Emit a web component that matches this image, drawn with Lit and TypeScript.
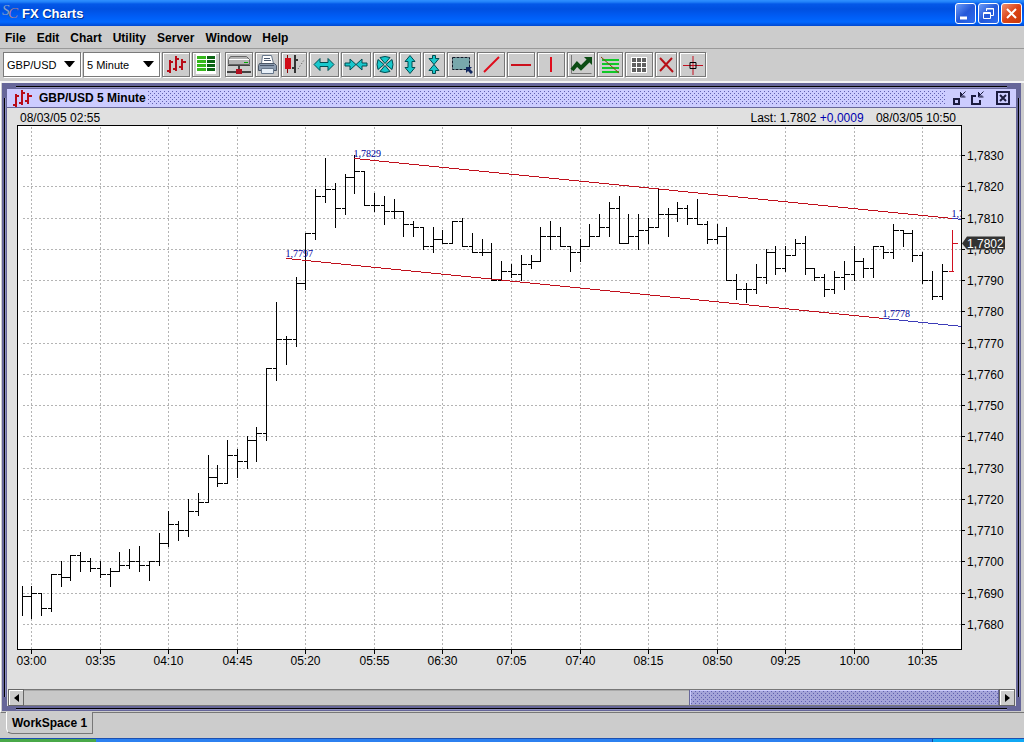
import { LitElement, html, svg, css } from "lit";
import { customElement, property, state } from "lit/decorators.js";
import { classMap } from "lit/directives/class-map.js";

/** One five-minute bar: high, low and close in pips above 1.0000. */
type Bar = [number, number, number];

const BARS: Bar[] = [
  [7692, 7683, 7689], [7692, 7682, 7690], [7690, 7683, 7685], [7696, 7684, 7696],
  [7700, 7692, 7695], [7702, 7694, 7702], [7703, 7697, 7700], [7701, 7697, 7698],
  [7700, 7695, 7696], [7698, 7692, 7697], [7703, 7697, 7699], [7704, 7698, 7700],
  [7705, 7697, 7699], [7700, 7694, 7700], [7709, 7699, 7706], [7716, 7705, 7712],
  [7713, 7707, 7710], [7720, 7708, 7716], [7722, 7715, 7719], [7734, 7719, 7727],
  [7731, 7724, 7725], [7739, 7725, 7734], [7736, 7727, 7732], [7740, 7730, 7739],
  [7743, 7732, 7741], [7762, 7739, 7762], [7783, 7758, 7771], [7772, 7763, 7771],
  [7791, 7769, 7789], [7805, 7787, 7805], [7819, 7803, 7817], [7829, 7815, 7819],
  [7821, 7807, 7813], [7824, 7811, 7823], [7830, 7818, 7825], [7825, 7814, 7814],
  [7818, 7812, 7814], [7817, 7808, 7812], [7816, 7810, 7812], [7812, 7804, 7808],
  [7809, 7804, 7807], [7807, 7800, 7801], [7807, 7799, 7803], [7806, 7802, 7802],
  [7809, 7802, 7809], [7810, 7801, 7801], [7805, 7799, 7799], [7803, 7798, 7799],
  [7802, 7790, 7790], [7796, 7790, 7793], [7795, 7791, 7792], [7798, 7790, 7795],
  [7798, 7794, 7796], [7807, 7796, 7804], [7809, 7800, 7804], [7807, 7801, 7801],
  [7801, 7793, 7799], [7803, 7796, 7801], [7808, 7801, 7804], [7811, 7804, 7807],
  [7815, 7804, 7813], [7817, 7802, 7802], [7811, 7802, 7804], [7811, 7800, 7806],
  [7810, 7802, 7807], [7819, 7807, 7811], [7813, 7804, 7811], [7815, 7809, 7813],
  [7814, 7808, 7810], [7816, 7808, 7808], [7809, 7802, 7803], [7808, 7802, 7804],
  [7807, 7790, 7790], [7792, 7784, 7787], [7789, 7783, 7787], [7795, 7786, 7791],
  [7800, 7789, 7799], [7801, 7792, 7794], [7801, 7793, 7798], [7803, 7798, 7802],
  [7804, 7792, 7794], [7794, 7790, 7791], [7792, 7785, 7787], [7793, 7786, 7791],
  [7796, 7787, 7792], [7801, 7790, 7796], [7797, 7791, 7794], [7801, 7791, 7801],
  [7801, 7797, 7799], [7808, 7797, 7806], [7806, 7801, 7805], [7806, 7796, 7798],
  [7799, 7789, 7790], [7793, 7784, 7785], [7795, 7784, 7793], [7806, 7793, 7802],
];

const FIRST_MINUTE = 2 * 60 + 55;
const TOP_PRICE = 7839.6;
const PRICE_SPAN = 167.6;

const priceText = (p: number) => `1,${p}`;
const timeText = (i: number) => {
  const m = FIRST_MINUTE + i * 5;
  return `${String(Math.floor(m / 60)).padStart(2, "0")}:${String(m % 60).padStart(2, "0")}`;
};

@customElement("price-chart")
export class PriceChart extends LitElement {
  static styles = css`
    :host { display: block; position: relative; min-height: 300px; overflow: hidden; }
    .canvas { position: absolute; inset: 0; width: 100%; height: 100%; display: block; }
    .crisp { shape-rendering: crispEdges; }
    .plot { fill: #fff; }
    .grid { stroke: #b4b4b4; stroke-dasharray: 2 2; fill: none; }
    .axis { stroke: #000; fill: none; }
    .bar { stroke: #000; fill: none; }
    .bar-live { stroke: #d01020; fill: none; }
    .trend { stroke: #c0101c; }
    .trend-ext { stroke: #3c3cb8; }
    .label { font: 12px "Liberation Sans", Arial, sans-serif; fill: #000; }
    .mid { text-anchor: middle; }
    .note { font: 10px "Liberation Serif", "Times New Roman", serif; fill: #0000a0; }
    .tag { fill: #333; }
    .tag-text { fill: #fff; }
  `;

  @state() private w = 1009;
  @state() private h = 565;
  private observer = new ResizeObserver(() => this.measure());

  connectedCallback() {
    super.connectedCallback();
    this.observer.observe(this);
  }

  disconnectedCallback() {
    this.observer.disconnect();
    super.disconnectedCallback();
  }

  private measure() {
    this.w = this.clientWidth;
    this.h = this.clientHeight;
  }

  render() {
    const left = 10;
    const pw = this.w - left - 55;
    const ph = this.h - 40;
    const right = left + pw;
    const x = (i: number) => Math.floor(5 + (i * (pw - 14)) / 95) + 0.5;
    const y = (p: number) => Math.round(((TOP_PRICE - p) * ph) / PRICE_SPAN) + 0.5;
    const prices = Array.from({ length: 16 }, (_, i) => 7830 - i * 10);
    const times = Array.from({ length: 14 }, (_, i) => 1 + i * 7);
    const last = BARS.length - 1;
    const barPath = (b: Bar, i: number) => {
      const open = i === 0 ? null : BARS[i - 1][2];
      const tick = open === null || i === last ? "" : `M${x(i) - 4} ${y(open)}H${x(i)}`;
      return `${tick}M${x(i)} ${y(b[0]) - 0.5}V${y(b[1]) + 0.5}M${x(i)} ${y(b[2])}h5`;
    };
    const slope = (y(7810) - y(7829)) / (x(95) - x(34));
    const upEnd = y(7810) + slope * (pw - x(95));
    const lowEnd = y(7778) + slope * (pw - x(88));
    const tagY = y(BARS[last][2]);

    return html`<svg class="canvas" role="img" aria-label="GBP/USD 5 Minute">
      <svg x=${left} y="0" width=${pw} height=${ph}>
        <rect class="plot" width=${pw} height=${ph}></rect>
        <g class="grid crisp">
          ${prices.map((p) => svg`<path d="M6 ${y(p)}H${pw}"></path>`)}
          ${times.map((i) => svg`<path d="M${x(i)} 2V${ph}"></path>`)}
        </g>
        <path class="bar crisp" d=${BARS.slice(0, last).map(barPath).join("")}></path>
        <g class="crisp">
          <line class="trend" x1=${x(34)} y1=${y(7829)} x2=${x(95)} y2=${y(7810)}></line>
          <line class="trend-ext" x1=${x(95)} y1=${y(7810)} x2=${pw} y2=${upEnd}></line>
          <line class="trend" x1=${x(27)} y1=${y(7797)} x2=${x(88)} y2=${y(7778)}></line>
          <line class="trend-ext" x1=${x(88)} y1=${y(7778)} x2=${pw} y2=${lowEnd}></line>
        </g>
        <path class="bar-live crisp" d=${`${barPath(BARS[last], last)}M${x(last) - 4} ${y(7793)}h5`}></path>
        <text class="note" x=${x(34) - 1} y=${y(7829) - 2}>1,7829</text>
        <text class="note" x=${x(27) - 1} y=${y(7797) - 2}>1,7797</text>
        <text class="note" x=${x(88) - 1} y=${y(7778) - 2}>1,7778</text>
        <text class="note" x=${x(95) - 1} y=${y(7810) - 2}>1,7810</text>
      </svg>
      <g class="axis crisp">
        <rect x=${left + 0.5} y="0.5" width=${pw} height=${ph}></rect>
        ${prices.map((p) => svg`<path d="M${right} ${y(p)}h4"></path>`)}
        ${times.map((i) => svg`<path d="M${left + x(i)} ${ph}v5"></path>`)}
      </g>
      ${prices.map((p) => svg`<text class="label" x=${right + 6} y=${y(p) + 4}>${priceText(p)}</text>`)}
      ${times.map((i) => svg`<text class="label mid" x=${left + x(i)} y=${ph + 16}>${timeText(i)}</text>`)}
      <path class="tag" d="M${right + 1} ${tagY}l5 -7h38v13h-38z"></path>
      <text class="label tag-text" x=${right + 6} y=${tagY + 4}>${priceText(BARS[last][2])}</text>
    </svg>`;
  }
}

const barsIcon = svg`<path d="M4 6v13M1 17h3M4 8h3M10 2v15M7 15h3M10 5h3M16 5v11M13 13h3M16 8h4" stroke="#b80c18" stroke-width="2" fill="none"></path>`;

/** Toolbar entries: name, width, glyph (20x21 artboard), spacing flag and teal outline flag. */
const TOOLS: { name: string; w: number; gap?: boolean; teal?: boolean; icon: unknown }[] = [
  { name: "Bar chart", w: 28, icon: barsIcon },
  { name: "Quote board", w: 28, icon: svg`<rect width="20" height="20" fill="#fff"></rect>
      ${[2, 6, 10, 14].map((y) => svg`<path d="M1 ${y}h9v3h-9z" fill="#36b81c"></path><path d="M11 ${y}h8v3h-8z" fill="#0c6414"></path>`)}` },
  { name: "Connection", w: 28, gap: true, icon: svg`<path d="M1.500 2.500h16l3 3v5h-21v-5z" fill="#b4b4b4" stroke="#666"></path>
      <path d="M0 5.500h20" stroke="#fff"></path><path d="M-1 11.500h22" stroke="#444"></path><path d="M15 8.500h4" stroke="#0a0"></path>
      <path d="M10 12v6M-2 18h24" stroke="#444" stroke-width="2"></path><path d="M7 15h6v5h-6z" fill="#b01020"></path>` },
  { name: "Print", w: 24, icon: svg`<path d="M5.500 1.500h9l2 8h-12z" fill="#fff" stroke="#68788c"></path>
      <path d="M2.500 9.500h15l2 2v5h-18v-5z" fill="#8c9cb0" stroke="#4c5868"></path><path d="M4.500 14.500h12v5h-12z" fill="#e8f0f8" stroke="#68788c"></path>
      <path d="M3 11.500h14M7 4.500h6M7 6.500h7" stroke="#48566c"></path>` },
  { name: "Chart style", w: 26, icon: svg`<path d="M3.500 1v18" stroke="#800"></path><path d="M1 4h6v11h-6z" fill="#d00c18"></path>
      <path d="M11 1v18M8 14h3M11 6h3" stroke="#333" stroke-width="2"></path><path d="M14 15l6-9" stroke="#555" stroke-dasharray="1 2"></path>` },
  { name: "Widen", w: 30, teal: true, icon: svg`<path d="M0 10.500l6-6v4h8v-4l6 6l-6 6v-4h-8v4z"></path>` },
  { name: "Narrow", w: 30, teal: true, icon: svg`<path d="M-1 9h5v-4l6 5.500l6-5.500v4h5v3h-5v4l-6-5.500l-6 5.500v-4h-5z"></path>` },
  { name: "Fit", w: 24, teal: true, icon: svg`<path d="M5 3.500q5-2 10 0l-5 6zM5 17.500q5 2 10 0l-5-6zM3 5.500q-2 5 0 10l6-5zM17 5.500q2 5 0 10l-6-5z"></path>` },
  { name: "Taller", w: 22, teal: true, icon: svg`<path d="M10 1.500l5 6h-3v6h3l-5 6l-5-6h3v-6h-3z"></path>` },
  { name: "Shorter", w: 22, teal: true, icon: svg`<path d="M8.500 1.500h3v3h3.500l-5 6l5 6h-3.500v3h-3v-3h-3.500l5-6l-5-6h3.500z"></path>` },
  { name: "Select area", w: 28, icon: svg`<path d="M1.500 3.500h17v12h-17z" fill="#78a8ac" stroke="#101828" stroke-dasharray="3 1"></path>
      <path d="M15 13h6l-2 2l3 3l-2 2l-3-3l-2 2z" fill="#102860"></path>` },
  { name: "Trend line", w: 28, icon: svg`<path d="M3 18L18 3" stroke="#e00c1c" stroke-width="2"></path>` },
  { name: "Horizontal line", w: 28, icon: svg`<path d="M0 11h20" stroke="#cc101c" stroke-width="2"></path>` },
  { name: "Vertical line", w: 28, icon: svg`<path d="M10 3v15" stroke="#e00c1c" stroke-width="2"></path>` },
  { name: "Indicators", w: 28, icon: svg`<path d="M0.500 1v18.500h20" stroke="#777" fill="none"></path>
      <path d="M1 16l5-6l4 4l8-8" stroke="#0c4c14" stroke-width="4" fill="none"></path><path d="M13 3h8v8z" fill="#0c4c14"></path>` },
  { name: "Fibonacci", w: 26, icon: svg`<path d="M2 6h17M2 10h17M2 14h17M2 18h17" stroke="#10c828" stroke-width="2"></path><path d="M1 3l18 16" stroke="#8c3c10"></path>` },
  { name: "Grid", w: 28, icon: svg`<path d="M2 3h16v16h-16z" fill="#fff"></path>
      ${[4, 9, 14].map((y) => svg`<path d="M3 ${y}h4v4h-4zM8 ${y}h4v4h-4zM13 ${y}h4v4h-4z" fill="#606060"></path>`)}` },
  { name: "Delete", w: 22, icon: svg`<path d="M4 4l13 14M16 4L4 17" stroke="#b81018" stroke-width="2"></path>` },
  { name: "Crosshair", w: 27, icon: svg`<path d="M0 11.500h20M10 2v19" stroke="#c01020"></path><path d="M7 8.500h6v6h-6z" fill="none" stroke="#000"></path>` },
];

@customElement("tool-bar")
export class ToolBar extends LitElement {
  static styles = css`
    :host { display: flex; flex-wrap: wrap; gap: 2px; padding: 3px 3px 4px; background: #ccc; }
    .pick { position: relative; display: block; height: 25px; }
    .field {
      appearance: none; box-sizing: border-box; width: 100%; height: 25px; margin: 0; padding: 0 20px 0 3px;
      border: 1px solid #7a7a7a; border-radius: 0; outline: 0; background: #fff; color: #000;
      font: 11px "Liberation Sans", Arial, sans-serif; box-shadow: 1px 1px #fff;
    }
    .wide { width: 78px; }
    .slim { width: 77px; }
    .arrow { position: absolute; right: 6px; top: 9px; width: 11px; height: 6px; pointer-events: none; }
    .tool {
      display: flex; align-items: center; justify-content: center; box-sizing: border-box; height: 25px;
      margin: 0; padding: 0; border: 1px solid #777; background: #ccc; box-shadow: 1px 1px #fff, inset 1px 1px #fff;
    }
    .apart { margin-left: 3px; }
    .glyph { width: 20px; height: 21px; flex: none; overflow: visible; fill: #18c8cc; stroke: none; }
    .teal { stroke: #004c50; }
  `;

  render() {
    return html`
      ${[["Symbol", "GBP/USD", "wide"], ["Period", "5 Minute", "slim"]].map(
        ([name, value, size]) => html`<label class="pick ${size}">
          <select class="field" aria-label=${name}><option>${value}</option></select>
          <svg class="arrow" viewBox="0 0 11 6"><path d="M0 0h11l-5 6h-1z"></path></svg>
        </label>`
      )}
      ${TOOLS.map((t) => html`<button
          class=${classMap({ tool: true, apart: !!t.gap })} style="width:${t.w}px" title=${t.name}>
          <svg class=${classMap({ glyph: true, teal: !!t.teal })} viewBox="0 0 20 21">${t.icon}</svg>
        </button>`)}
    `;
  }
}

@customElement("chart-frame")
export class ChartFrame extends LitElement {
  @property() heading = "";

  static styles = css`
    :host {
      position: relative; display: flex; flex-direction: column; box-sizing: border-box;
      border: 5px solid #666699; background: #e0e0e0;
      --dots: conic-gradient(at 1px 1px, transparent 75%, #6060b0 0);
    }
    .edge { position: absolute; background: #000; }
    .t { left: 9px; right: 9px; top: -2px; height: 1px; box-shadow: 0 1px #9090c0; }
    .b { left: 9px; right: 9px; bottom: -3px; height: 1px; box-shadow: 0 1px #9090c0; }
    .l { top: 10px; bottom: 9px; left: -3px; width: 1px; box-shadow: 1px 0 #9090c0; }
    .r { top: 10px; bottom: 9px; right: -3px; width: 1px; box-shadow: 1px 0 #9090c0; }
    .bar {
      display: flex; align-items: center; height: 20px; box-sizing: border-box; padding: 0 5px; background: #ccccff;
      border-top: 1px solid #666699; border-bottom: 1px solid #666699;
    }
    .logo { width: 20px; height: 20px; margin-right: 7px; }
    .name { margin: 0 2px 0 0; font: bold 12px "Liberation Sans", Arial, sans-serif; }
    .grip {
      flex: 1; height: 14px; margin-right: 3px;
      background: var(--dots) 0 0 / 4px 4px, var(--dots) 2px 2px / 4px 4px, #ccccff;
    }
    .ctl { width: 16px; height: 16px; margin: 0 0 0 2px; padding: 0; border: 0; background: none; display: block; }
    .last { margin: 0 0 0 10px; }
    .ctl svg { display: block; width: 16px; height: 16px; }
    .info {
      display: flex; justify-content: space-between; height: 17px; padding: 0 60px 0 13px;
      font: 12px/20px "Liberation Sans", Arial, sans-serif;
    }
    .change { color: #0000b0; }
    .stamp { margin-left: 9px; }
    .chart { flex: 1; }
    .scroll { display: flex; height: 17px; margin: 0 1px; box-sizing: border-box; }
    .step {
      width: 16px; height: 17px; padding: 0; border: 1px solid #666; background: #ccc; box-sizing: border-box;
      box-shadow: inset 1px 1px #fff; display: flex; align-items: center; justify-content: center;
    }
    .step svg { width: 5px; height: 8px; display: block; }
    .track {
      flex: 1; display: flex; justify-content: flex-end; box-sizing: border-box;
      border: solid #777; border-width: 1px 0; background: #c8c8c8; box-shadow: inset 0 1px #aaa;
    }
    .thumb {
      box-sizing: border-box; border: 1px solid #666699; border-width: 0 1px; box-shadow: inset 1px 1px #ccccff;
      background: var(--dots) 1px 1px / 4px 4px, var(--dots) 3px 3px / 4px 4px, #a4a4d8;
    }
    .ctl-line { fill: none; stroke: #1c1c40; stroke-width: 2; }
    .thin { stroke-width: 1; }
  `;

  render() {
    return html`
      <span class="edge t"></span><span class="edge b"></span><span class="edge l"></span><span class="edge r"></span>
      <header class="bar">
        <svg class="logo" viewBox="0 0 20 20">${barsIcon}</svg>
        <h2 class="name">${this.heading}</h2>
        <span class="grip"></span>
        <button class="ctl" title="Iconify"><svg class="ctl-line" viewBox="0 0 16 16">
          <path d="M3 9h5v5h-5z"></path><path class="thin" d="M9.500 6.500l5-5M9.500 2v5h5M10.500 3v3h3"></path></svg></button>
        <button class="ctl" title="Maximize"><svg class="ctl-line" viewBox="0 0 16 16">
          <path d="M7 6h-4v8h8v-4"></path><path class="thin" d="M9.500 6.500l5-5M9.500 2v5h5M10.500 3v3h3"></path></svg></button>
        <button class="ctl last" title="Close"><svg class="ctl-line" viewBox="0 0 16 16">
          <path d="M2 2h12v12h-12z"></path><path d="M5 5l6 6M11 5l-6 6"></path></svg></button>
      </header>
      <div class="info">
        <span>08/03/05 02:55</span>
        <span>Last: 1.7802 <span class="change">+0,0009</span> <span class="stamp">08/03/05 10:50</span></span>
      </div>
      <price-chart class="chart"></price-chart>
      <div class="scroll">
        <button class="step" title="Scroll left"><svg viewBox="0 0 5 8"><path d="M5 0v8l-5-4z"></path></svg></button>
        <div class="track"><div class="thumb" style="width:31.8%"></div></div>
        <button class="step" title="Scroll right"><svg viewBox="0 0 5 8"><path d="M0 0v8l5-4z"></path></svg></button>
      </div>
    `;
  }
}

@customElement("app-root")
export class AppRoot extends LitElement {
  static styles = css`
    :host {
      display: flex; flex-direction: column; min-height: 100vh; box-sizing: border-box; background: #ccc;
      font: bold 12px "Liberation Sans", Arial, sans-serif; color: #000;
    }
    .title {
      display: flex; align-items: center; height: 26px; box-sizing: border-box; padding: 0 2px;
      background: linear-gradient(#3090ff 0, #2080f8 2px, #0458e8 4px, #0050e0 9px, #005cf4 16px, #0068ff 22px, #0048d0 26px);
    }
    .brand { width: 18px; height: 22px; overflow: visible; }
    .brand text { font: italic 15px "Liberation Serif", serif; }
    .s { fill: #88a0c8; }
    .c { fill: #a88090; }
    .caption { flex: 1; margin: 0 0 0 2px; color: #fff; font-size: 13px; text-shadow: 1px 1px #003090; }
    .win {
      width: 21px; height: 21px; margin: 0 0 0 2px; padding: 0; box-sizing: border-box;
      border: 1px solid #fff; border-radius: 3px; background: linear-gradient(135deg, #6c9cf8, #2458d8 50%, #2c6cf0);
    }
    .close { background: linear-gradient(135deg, #f09070, #dc4418 50%, #c83808); }
    .win svg { display: block; width: 19px; height: 19px; fill: none; stroke: #fff; }
    .menu { display: flex; gap: 11px; height: 22px; padding: 0 5px; border-bottom: 1px solid #999; line-height: 24px; }
    .item { padding: 0; border: 0; background: none; font: inherit; line-height: inherit; color: inherit; }
    .desk {
      flex: 1; display: flex; flex-direction: column; padding: 0 3px 1px 1px;
      border-top: 2px solid #f4f4f4; border-left: 1px solid #fff; border-bottom: 1px solid #777;
    }
    .frame { flex: 1; }
    .tabs { height: 25px; padding-left: 6px; }
    .tab {
      display: block; position: relative; top: -1px; height: 22px; padding: 0 5px; border: 0;
      background: #ccc; border-right: 1px solid #777; border-bottom: 1px solid #777; border-left: 1px solid #fff;
      border-bottom-left-radius: 6px; font: inherit; line-height: 23px;
    }
    .task { display: flex; height: 4px; border-top: 1px solid #1c50b0; box-sizing: border-box; background: #2c80f0; }
    .start { width: 96px; background: #48a848; }
    .tray { width: 92px; margin-left: auto; background: #10a8f4; border-left: 1px solid #1048a0; box-sizing: border-box; }
  `;

  render() {
    return html`
      <header class="title">
        <svg class="brand" viewBox="0 0 18 22"><text class="s" x="0" y="13">S</text><text class="c" x="6" y="16">C</text></svg>
        <h1 class="caption">FX Charts</h1>
        <button class="win" title="Minimize"><svg viewBox="0 0 19 19"><path d="M4 14h7" stroke-width="3"></path></svg></button>
        <button class="win" title="Restore"><svg viewBox="0 0 19 19"><path d="M7.500 7V4.500h7v7h-2.500M7 5h8"></path><path d="M4.500 8.500h7v6h-7zM4 9.500h8"></path></svg></button>
        <button class="win close" title="Close"><svg viewBox="0 0 19 19"><path d="M5 5l9 9M14 5l-9 9" stroke-width="2"></path></svg></button>
      </header>
      <nav class="menu">
        ${["File", "Edit", "Chart", "Utility", "Server", "Window", "Help"].map(
          (m) => html`<button class="item">${m}</button>`
        )}
      </nav>
      <tool-bar></tool-bar>
      <main class="desk"><chart-frame class="frame" heading="GBP/USD 5 Minute"></chart-frame></main>
      <div class="tabs"><button class="tab">WorkSpace 1</button></div>
      <footer class="task"><span class="start"></span><span class="tray"></span></footer>
    `;
  }
}
